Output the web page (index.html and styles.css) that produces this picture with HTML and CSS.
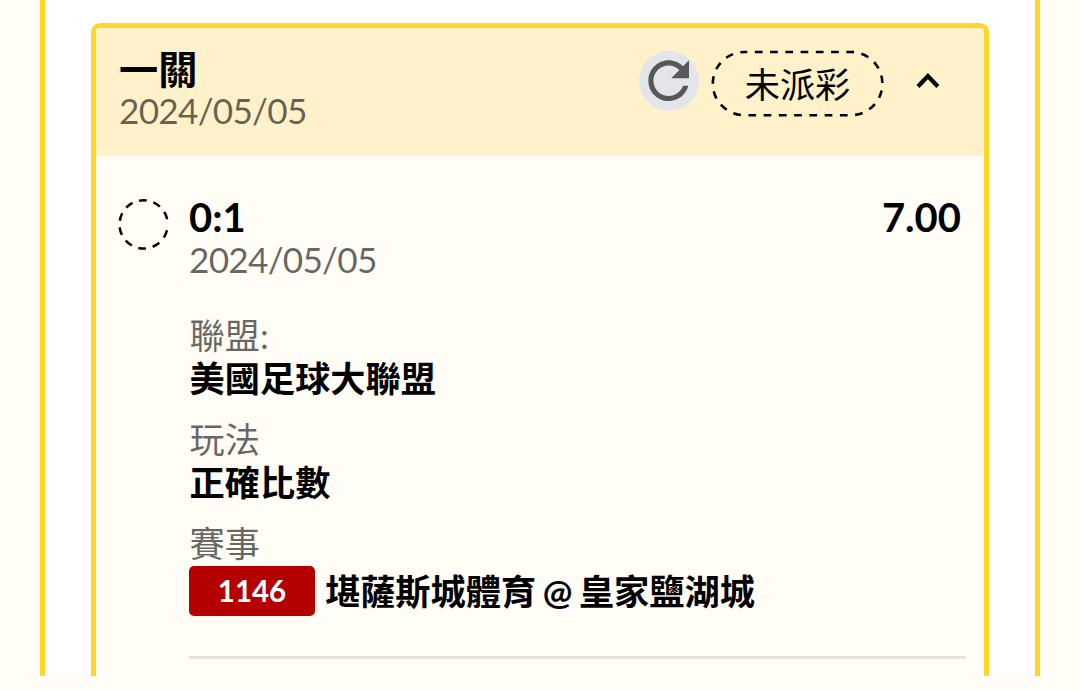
FILE: index.html
```
<!DOCTYPE html>
<html lang="zh-Hant">
<head>
  <meta charset="UTF-8">
  <meta name="viewport" content="width=device-width, initial-scale=1.0">
  <title>投注紀錄</title>
  <link rel="stylesheet" href="styles.css">
</head>
<body>

  <div class="panel">
    <div class="ticket">
      <div class="ticket-header">
        <div class="ticket-info">
          <div class="title">一關</div>
          <div class="date">2024/05/05</div>
        </div>
        <div class="actions">
          <button class="refresh" aria-label="重新整理">
            <svg width="60" height="60" viewBox="0 0 60 60">
              <path transform="translate(-0.8 -0.8) scale(2.54)" fill="#58585a" d="M17.65 6.35C16.2 4.9 14.21 4 12 4c-4.42 0-7.99 3.58-7.99 8s3.57 8 7.99 8c3.73 0 6.84-2.55 7.73-6h-2.08c-.82 2.33-3.04 4-5.65 4-3.31 0-6-2.69-6-6s2.69-6 6-6c1.66 0 3.14.69 4.22 1.78L13 11h7V4l-2.35 2.35z"/>
            </svg>
          </button>
          <div class="status">
            <svg class="status-border" width="173" height="67" viewBox="0 0 173 67">
              <rect x="1.8" y="2" width="169.6" height="63.2" rx="31.6"/>
            </svg>
            <span>未派彩</span>
          </div>
          <svg class="arrow" width="26" height="20" viewBox="0 0 26 20">
            <path d="M3 15.5L12.9 5L22.8 15.5"/>
          </svg>
        </div>
      </div>

      <div class="bet">
        <svg class="bet-mark" width="52" height="52" viewBox="0 0 52 52">
          <circle cx="25.6" cy="26.4" r="24.1"/>
        </svg>
        <div class="bet-detail">
          <div class="bet-top">
            <span class="pick">0:1</span>
            <span class="odds">7.00</span>
          </div>
          <div class="date">2024/05/05</div>

          <dl class="fields">
            <dt>聯盟:</dt>
            <dd>美國足球大聯盟</dd>
            <dt>玩法</dt>
            <dd>正確比數</dd>
            <dt>賽事</dt>
            <dd class="match"><span class="match-no">1146</span><span>堪薩斯城體育 @ 皇家鹽湖城</span></dd>
          </dl>
        </div>
      </div>
    </div>
  </div>

</body>
</html>
```
FILE: styles.css
```
* {
  box-sizing: border-box;
}

body {
  margin: 0;
  height: 690px;
  overflow: hidden;
  background-color: #fffdf5;
  font-family: Lato, "Noto Sans CJK TC", sans-serif;
  font-size: 35.2px;
  color: #000;
}

.panel {
  width: 1000px;
  height: 676px;
  margin-left: 40px;
  padding: 23px 46px 0;
  border: solid #ffd628;
  border-width: 0 5px;
  background-color: #fff;
}

.ticket {
  height: 653px;
  border: 5px solid #ffd628;
  border-bottom: 0;
  border-radius: 9px 9px 0 0;
  background-color: #fffdf5;
}

.ticket-header {
  display: flex;
  justify-content: space-between;
  height: 128px;
  padding: 22px 43px 0 23px;
  border-radius: 4px 4px 0 0;
  background-color: #fff1ca;
}

.title {
  margin-top: -2px;
  font-size: 39.2px;
  font-weight: 700;
  line-height: 41px;
}

.date {
  line-height: 42px;
  letter-spacing: -0.75px;
  color: rgba(0, 0, 0, 0.6);
}

.actions {
  display: flex;
  align-items: center;
  height: 67px;
}

.refresh {
  display: flex;
  width: 60px;
  height: 60px;
  margin: 0 12px 5px 0;
  padding: 0;
  border: 0;
  border-radius: 50%;
  background-color: #e4e5e8;
}

.status {
  position: relative;
  width: 173px;
  height: 67px;
  line-height: 69px;
  text-align: center;
}

.status-border {
  position: absolute;
  top: 0;
  left: 0;
}

.status-border rect {
  fill: none;
  stroke: #000;
  stroke-width: 2.6;
  stroke-dasharray: 7.7 7.55;
  stroke-dashoffset: 4.8;
}

.arrow {
  margin: 0 0 5px 31px;
}

.arrow path {
  fill: none;
  stroke: #000;
  stroke-width: 4.2;
}

.bet {
  display: flex;
  padding: 42px 18px 0 22px;
}

.bet-mark {
  flex: none;
  margin-right: 19px;
}

.bet-mark circle {
  fill: none;
  stroke: #000;
  stroke-width: 2.5;
  stroke-dasharray: 7.8 6.8;
  stroke-dashoffset: 8.6;
}

.bet-detail {
  flex: 1;
  border-bottom: 3px solid #e7e3dc;
  padding-bottom: 40px;
}

.bet-top {
  display: flex;
  justify-content: space-between;
  margin-top: -2px;
  padding-right: 5px;
  font-size: 40px;
  font-weight: 700;
  line-height: 42px;
}

.fields {
  margin: 34px 0 0;
}

.fields dt,
.fields dd {
  padding-left: 0.6px;
}

.fields dt {
  line-height: 42px;
  color: rgba(0, 0, 0, 0.6);
}

.fields dd {
  margin: 0 0 18px;
  font-weight: 700;
  line-height: 44px;
}

.fields .match {
  display: flex;
  align-items: center;
  gap: 10px;
  margin: 2px 0 0;
  padding-left: 0;
  line-height: 50px;
  word-spacing: -2px;
}

.match-no {
  width: 126px;
  height: 50px;
  border-radius: 5px;
  background-color: #b40000;
  color: #fff;
  font-size: 29.5px;
  text-align: center;
}
```
